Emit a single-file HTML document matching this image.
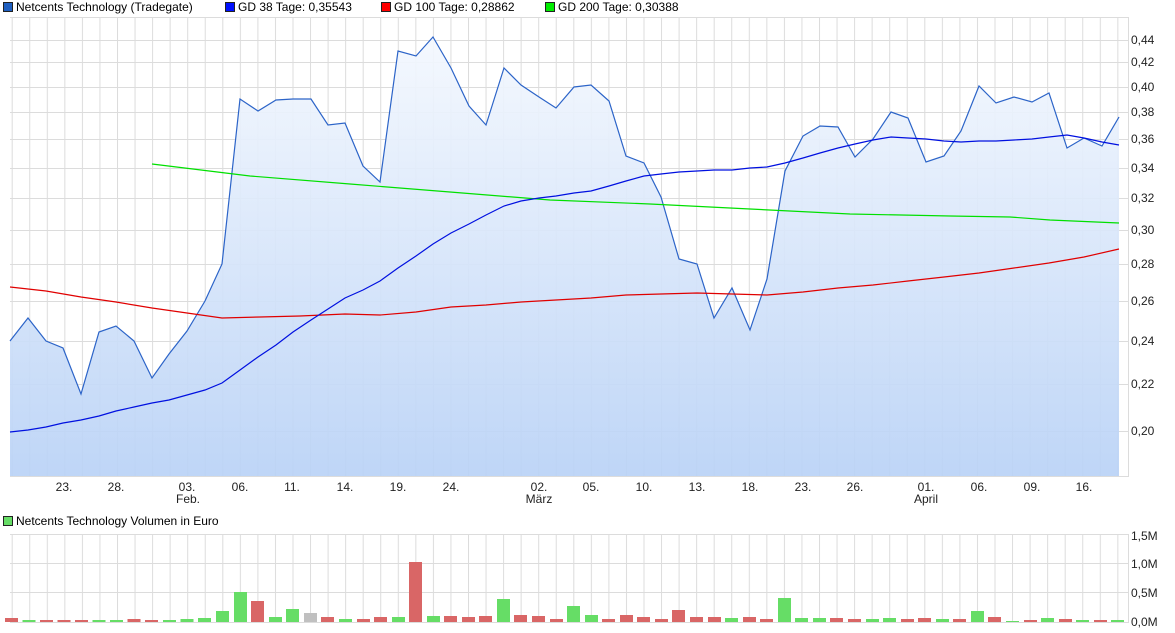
<!DOCTYPE html>
<html><head><meta charset="utf-8"><style>
html,body{margin:0;padding:0;background:#fff;width:1175px;height:633px;overflow:hidden}
svg{display:block;font-family:"Liberation Sans",Arial,sans-serif;font-size:12px}
</style></head><body>
<svg width="1175" height="633" viewBox="0 0 1175 633" xmlns="http://www.w3.org/2000/svg">
<defs>
<linearGradient id="g" x1="0" y1="0" x2="0" y2="1">
<stop offset="0" stop-color="#f4f8fe"/><stop offset="1" stop-color="#b9d2f6"/>
</linearGradient>
<pattern id="vg" x="11.7" y="0" width="17.55" height="700" patternUnits="userSpaceOnUse">
<line x1="0.5" y1="0" x2="0.5" y2="700" stroke="#dcdcdc" stroke-width="1"/>
</pattern>
</defs>
<!-- legend -->
<rect x="3.5" y="2.5" width="9" height="9" fill="#1f5fc0" stroke="#222"/>
<text x="16" y="11">Netcents Technology (Tradegate)</text>
<rect x="225.5" y="2.5" width="9" height="9" fill="#0010ff" stroke="#222"/>
<text x="238" y="11">GD 38 Tage: 0,35543</text>
<rect x="381.5" y="2.5" width="9" height="9" fill="#ff0000" stroke="#222"/>
<text x="394" y="11">GD 100 Tage: 0,28862</text>
<rect x="545.5" y="2.5" width="9" height="9" fill="#00ee00" stroke="#222"/>
<text x="558" y="11">GD 200 Tage: 0,30388</text>

<!-- price chart grid -->
<rect x="10" y="17" width="1118" height="459" fill="url(#vg)"/>
<g stroke="#dcdcdc">
<line x1="10" y1="17.5" x2="1128" y2="17.5"/>
<line x1="10" y1="40.5" x2="1128" y2="40.5"/>
<line x1="10" y1="62.5" x2="1128" y2="62.5"/>
<line x1="10" y1="87.5" x2="1128" y2="87.5"/>
<line x1="10" y1="112.5" x2="1128" y2="112.5"/>
<line x1="10" y1="139.5" x2="1128" y2="139.5"/>
<line x1="10" y1="168.5" x2="1128" y2="168.5"/>
<line x1="10" y1="198.5" x2="1128" y2="198.5"/>
<line x1="10" y1="230.5" x2="1128" y2="230.5"/>
<line x1="10" y1="264.5" x2="1128" y2="264.5"/>
<line x1="10" y1="301.5" x2="1128" y2="301.5"/>
<line x1="10" y1="341.5" x2="1128" y2="341.5"/>
<line x1="10" y1="384.5" x2="1128" y2="384.5"/>
<line x1="10" y1="431.5" x2="1128" y2="431.5"/>
<line x1="1128.5" y1="17" x2="1128.5" y2="477"/>
<line x1="10" y1="476.5" x2="1129" y2="476.5"/>
</g>
<!-- area -->
<polygon fill="url(#g)" opacity="0.92" points="10,476 10,341 28,318 46,341 63,348 81,394 99,332 116,326 134,341 152,378 169,354 187,331 205,301 222,264 240,99 258,111 276,100 293,99 311,99 328,125 345,123 363,166 380,182 398,51 416,56 433,37 451,68 469,106 486,125 504,68 521,85 539,97 556,108 574,87 591,85 609,101 626,156 644,163 661,197 679,259 697,264 714,318 732,288 750,330 767,279 785,171 803,136 820,126 838,127 855,157 873,139 891,112 908,118 926,162 944,156 961,131 979,86 996,103 1014,97 1032,102 1049,93 1067,148 1084,138 1102,146 1119,117 1119,476"/>
<g fill="none" stroke="#c6d5ec" opacity="0.6">
</g>
<polyline fill="none" stroke="#2c64c8" stroke-width="1.2" points="10,341 28,318 46,341 63,348 81,394 99,332 116,326 134,341 152,378 169,354 187,331 205,301 222,264 240,99 258,111 276,100 293,99 311,99 328,125 345,123 363,166 380,182 398,51 416,56 433,37 451,68 469,106 486,125 504,68 521,85 539,97 556,108 574,87 591,85 609,101 626,156 644,163 661,197 679,259 697,264 714,318 732,288 750,330 767,279 785,171 803,136 820,126 838,127 855,157 873,139 891,112 908,118 926,162 944,156 961,131 979,86 996,103 1014,97 1032,102 1049,93 1067,148 1084,138 1102,146 1119,117"/>
<polyline fill="none" stroke="#00e000" stroke-width="1.2" points="152,164 250,176 350,184 450,192 550,200 650,204 750,209 850,214 950,216 1010,217 1050,220 1119,223"/>
<polyline fill="none" stroke="#e00000" stroke-width="1.2" points="10,287 46,291 81,297 116,302 152,308 187,313 222,318 260,317 300,316 345,314 380,315 416,312 451,307 486,305 521,302 556,300 591,298 626,295 661,294 697,293 732,294 767,295 803,292 838,288 873,285 908,281 944,277 979,273 1014,268 1049,263 1084,257 1119,249"/>
<polyline fill="none" stroke="#0010e0" stroke-width="1.2" points="10,432 28,430 46,427 63,423 81,420 99,416 116,411 134,407 152,403 169,400 187,395 205,390 222,383 240,370 258,357 276,345 293,332 311,320 328,309 345,298 363,290 380,281 398,268 416,256 433,244 451,233 469,224 486,215 504,206 521,201 539,198 556,196 574,193 591,191 609,186 626,181 644,176 661,174 679,172 697,171 714,170 732,170 750,168 767,167 785,163 803,158 820,153 838,148 855,144 873,140 891,137 908,138 926,139 944,141 961,142 979,141 996,141 1014,140 1032,139 1049,137 1067,135 1084,138 1102,142 1119,145"/>
<!-- y labels -->
<g fill="#222">
<text x="1131" y="44">0,44</text><text x="1131" y="66">0,42</text><text x="1131" y="91">0,40</text>
<text x="1131" y="116">0,38</text><text x="1131" y="143">0,36</text><text x="1131" y="172">0,34</text>
<text x="1131" y="202">0,32</text><text x="1131" y="234">0,30</text><text x="1131" y="268">0,28</text>
<text x="1131" y="305">0,26</text><text x="1131" y="345">0,24</text><text x="1131" y="388">0,22</text>
<text x="1131" y="435">0,20</text>
</g>
<!-- x labels -->
<g fill="#222" text-anchor="middle">
<text x="64" y="491">23.</text><text x="116" y="491">28.</text><text x="187" y="491">03.</text>
<text x="188" y="503">Feb.</text>
<text x="240" y="491">06.</text><text x="292" y="491">11.</text><text x="345" y="491">14.</text>
<text x="398" y="491">19.</text><text x="451" y="491">24.</text><text x="539" y="491">02.</text>
<text x="539" y="503">März</text>
<text x="591" y="491">05.</text><text x="644" y="491">10.</text><text x="697" y="491">13.</text>
<text x="750" y="491">18.</text><text x="803" y="491">23.</text><text x="855" y="491">26.</text>
<text x="926" y="491">01.</text><text x="926" y="503">April</text>
<text x="979" y="491">06.</text><text x="1032" y="491">09.</text><text x="1084" y="491">16.</text>
</g>

<!-- volume legend -->
<rect x="3.5" y="516.5" width="9" height="9" fill="#66dd66" stroke="#222"/>
<text x="16" y="525">Netcents Technology Volumen in Euro</text>
<!-- volume grid -->
<rect x="10" y="534" width="1118" height="88" fill="url(#vg)"/>
<g stroke="#dcdcdc">
<line x1="10" y1="534.5" x2="1128" y2="534.5"/>
<line x1="10" y1="563.5" x2="1128" y2="563.5"/>
<line x1="10" y1="592.5" x2="1128" y2="592.5"/>
<line x1="1128.5" y1="534" x2="1128.5" y2="622"/>
</g>
<g fill="#222">
<text x="1131" y="540">1,5M</text><text x="1131" y="568">1,0M</text>
<text x="1131" y="597">0,5M</text><text x="1131" y="626">0,0M</text>
</g>
<!-- bars -->
<g>
<rect x="5" y="618" width="13" height="4" fill="#d96666"/>
<rect x="22.5" y="620" width="13" height="2" fill="#66dd66"/>
<rect x="40" y="620" width="13" height="2" fill="#d96666"/>
<rect x="57.5" y="620" width="13" height="2" fill="#d96666"/>
<rect x="75" y="620" width="13" height="2" fill="#d96666"/>
<rect x="92.5" y="620" width="13" height="2" fill="#66dd66"/>
<rect x="110" y="620" width="13" height="2" fill="#66dd66"/>
<rect x="127.5" y="619" width="13" height="3" fill="#d96666"/>
<rect x="145" y="620" width="13" height="2" fill="#d96666"/>
<rect x="163" y="620" width="13" height="2" fill="#66dd66"/>
<rect x="180.5" y="619" width="13" height="3" fill="#66dd66"/>
<rect x="198" y="618" width="13" height="4" fill="#66dd66"/>
<rect x="216" y="611" width="13" height="11" fill="#66dd66"/>
<rect x="234" y="592" width="13" height="30" fill="#66dd66"/>
<rect x="251" y="601" width="13" height="21" fill="#d96666"/>
<rect x="269" y="617" width="13" height="5" fill="#66dd66"/>
<rect x="286" y="609" width="13" height="13" fill="#66dd66"/>
<rect x="304" y="613" width="13" height="9" fill="#c0c0c0"/>
<rect x="321" y="617" width="13" height="5" fill="#d96666"/>
<rect x="339" y="619" width="13" height="3" fill="#66dd66"/>
<rect x="357" y="619" width="13" height="3" fill="#d96666"/>
<rect x="374" y="617" width="13" height="5" fill="#d96666"/>
<rect x="392" y="617" width="13" height="5" fill="#66dd66"/>
<rect x="409" y="562" width="13" height="60" fill="#d96666"/>
<rect x="427" y="616" width="13" height="6" fill="#66dd66"/>
<rect x="444" y="616" width="13" height="6" fill="#d96666"/>
<rect x="462" y="617" width="13" height="5" fill="#d96666"/>
<rect x="479" y="616" width="13" height="6" fill="#d96666"/>
<rect x="497" y="599" width="13" height="23" fill="#66dd66"/>
<rect x="514" y="615" width="13" height="7" fill="#d96666"/>
<rect x="532" y="616" width="13" height="6" fill="#d96666"/>
<rect x="550" y="619" width="13" height="3" fill="#d96666"/>
<rect x="567" y="606" width="13" height="16" fill="#66dd66"/>
<rect x="585" y="615" width="13" height="7" fill="#66dd66"/>
<rect x="602" y="619" width="13" height="3" fill="#d96666"/>
<rect x="620" y="615" width="13" height="7" fill="#d96666"/>
<rect x="637" y="617" width="13" height="5" fill="#d96666"/>
<rect x="655" y="619" width="13" height="3" fill="#d96666"/>
<rect x="672" y="610" width="13" height="12" fill="#d96666"/>
<rect x="690" y="617" width="13" height="5" fill="#d96666"/>
<rect x="708" y="617" width="13" height="5" fill="#d96666"/>
<rect x="725" y="618" width="13" height="4" fill="#66dd66"/>
<rect x="743" y="617" width="13" height="5" fill="#d96666"/>
<rect x="760" y="619" width="13" height="3" fill="#d96666"/>
<rect x="778" y="598" width="13" height="24" fill="#66dd66"/>
<rect x="795" y="618" width="13" height="4" fill="#66dd66"/>
<rect x="813" y="618" width="13" height="4" fill="#66dd66"/>
<rect x="830" y="618" width="13" height="4" fill="#d96666"/>
<rect x="848" y="619" width="13" height="3" fill="#d96666"/>
<rect x="866" y="619" width="13" height="3" fill="#66dd66"/>
<rect x="883" y="618" width="13" height="4" fill="#66dd66"/>
<rect x="901" y="619" width="13" height="3" fill="#d96666"/>
<rect x="918" y="618" width="13" height="4" fill="#d96666"/>
<rect x="936" y="619" width="13" height="3" fill="#66dd66"/>
<rect x="953" y="619" width="13" height="3" fill="#d96666"/>
<rect x="971" y="611" width="13" height="11" fill="#66dd66"/>
<rect x="988" y="617" width="13" height="5" fill="#d96666"/>
<rect x="1006" y="621" width="13" height="1" fill="#66dd66"/>
<rect x="1024" y="620" width="13" height="2" fill="#d96666"/>
<rect x="1041" y="618" width="13" height="4" fill="#66dd66"/>
<rect x="1059" y="619" width="13" height="3" fill="#d96666"/>
<rect x="1076" y="620" width="13" height="2" fill="#66dd66"/>
<rect x="1094" y="620" width="13" height="2" fill="#d96666"/>
<rect x="1111" y="620" width="13" height="2" fill="#66dd66"/>
</g>
<line x1="10" y1="622.5" x2="1129" y2="622.5" stroke="#dcdcdc"/>
</svg>
</body></html>
